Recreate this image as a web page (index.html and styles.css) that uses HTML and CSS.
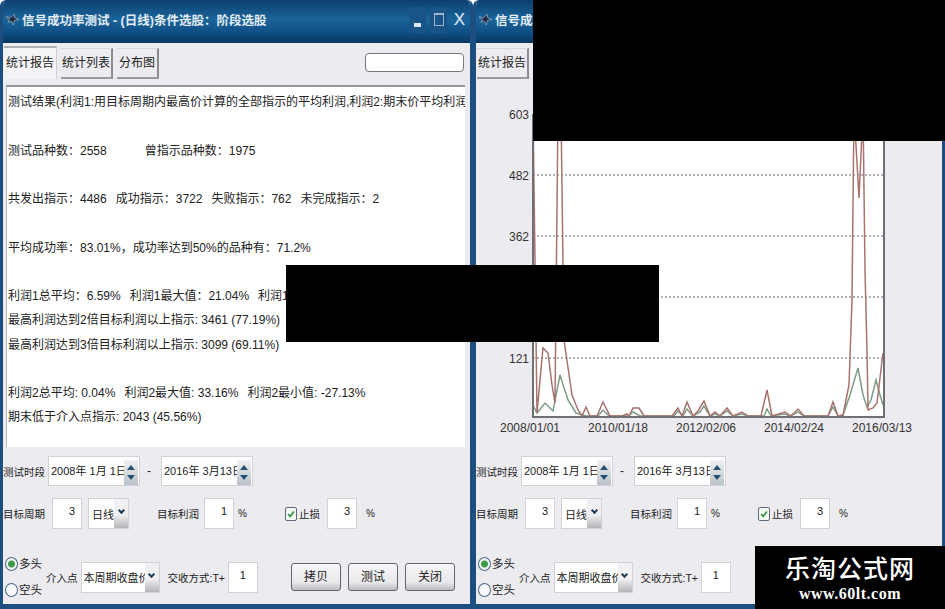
FILE: index.html
```html
<!DOCTYPE html>
<html lang="zh-CN">
<head>
  <meta charset="UTF-8">
  <title>信号成功率测试</title>
  <link rel="stylesheet" href="styles.css">
</head>
<body>

<div class="desktop">

  <!-- 左边窗口: 统计报告 -->
  <div class="window window-left">
    <div class="titlebar">
      <svg class="title-icon" viewBox="0 0 14 12"><path d="M0 3 L5 4 L9 0 L9 4 L14 6 L9 7 L8 12 L6 8 L2 9 L4 6 Z" fill="#1c2a3c" stroke="#c9d4e0" stroke-width="0.6"/></svg>
      <span class="title-text">信号成功率测试 - (日线)条件选股：阶段选股</span>
      <div class="win-buttons">
        <span class="win-btn"><i class="min-mark"></i></span>
        <span class="win-btn"><i class="max-mark"></i></span>
        <span class="win-btn close-mark">X</span>
      </div>
    </div>
    <div class="client">
      <div class="tabs">
        <span class="tab tab-active">统计报告</span>
        <span class="tab">统计列表</span>
        <span class="tab">分布图</span>
        <span class="search-box"></span>
      </div>
      <div class="report">
        <p>测试结果(利润1:用目标周期内最高价计算的全部指示的平均利润,利润2:期末价平均利润)</p>
        <p class="blank"></p>
        <p>测试品种数：2558<span class="gap-wide"></span>曾指示品种数：1975</p>
        <p class="blank"></p>
        <p>共发出指示：4486<span class="gap"></span>成功指示：3722<span class="gap"></span>失败指示：762<span class="gap"></span>未完成指示：2</p>
        <p class="blank"></p>
        <p>平均成功率：83.01%，成功率达到50%的品种有：71.2%</p>
        <p class="blank"></p>
        <p>利润1总平均：6.59%<span class="gap"></span>利润1最大值：21.04%<span class="gap"></span>利润1最小值</p>
        <p>最高利润达到2倍目标利润以上指示: 3461 (77.19%)</p>
        <p>最高利润达到3倍目标利润以上指示: 3099 (69.11%)</p>
        <p class="blank"></p>
        <p>利润2总平均: 0.04%<span class="gap"></span>利润2最大值: 33.16%<span class="gap"></span>利润2最小值: -27.13%</p>
        <p>期末低于介入点指示: 2043 (45.56%)</p>
      </div>
      <div class="row row-dates">
        <span class="label">测试时段</span>
        <span class="date">2008年 1月 1日<span class="spin"><i class="up"></i><i class="down"></i></span></span>
        <span class="dash">-</span>
        <span class="date">2016年 3月13日<span class="spin"><i class="up"></i><i class="down"></i></span></span>
      </div>
      <div class="row row-target">
        <span class="label">目标周期</span>
        <span class="field field-period">3</span>
        <span class="combo combo-short">日线<span class="arrow"><i></i></span></span>
        <span class="label label-profit">目标利润</span>
        <span class="field">1</span>
        <span class="unit">%</span>
        <span class="check"><svg viewBox="0 0 12 12"><path d="M2.5 6 L5 9 L9.5 3" fill="none" stroke="#2f8f3a" stroke-width="2"/></svg></span>
        <span class="label">止损</span>
        <span class="field field-stop">3</span>
        <span class="unit unit-stop">%</span>
      </div>
      <div class="row row-entry">
        <div class="radios">
          <span class="radio-line"><span class="radio radio-on"></span>多头</span>
          <span class="radio-line"><span class="radio"></span>空头</span>
        </div>
        <span class="label label-entry">介入点</span>
        <span class="combo combo-long"><span class="combo-text">本周期收盘价</span><span class="arrow"><i></i></span></span>
        <span class="label label-settle">交收方式:T+</span>
        <span class="field field-settle">1</span>
        <div class="actions">
          <span class="button">拷贝</span>
          <span class="button">测试</span>
          <span class="button">关闭</span>
        </div>
      </div>
    </div>
  </div>

  <!-- 右边窗口: 分布图 -->
  <div class="window window-right">
    <div class="titlebar">
      <svg class="title-icon" viewBox="0 0 14 12"><path d="M0 3 L5 4 L9 0 L9 4 L14 6 L9 7 L8 12 L6 8 L2 9 L4 6 Z" fill="#1c2a3c" stroke="#c9d4e0" stroke-width="0.6"/></svg>
      <span class="title-text">信号成功率测试 - (日线)条件选股：阶段选股</span>
    </div>
    <div class="client">
      <div class="tabs">
        <span class="tab">统计报告</span>
        <span class="tab">统计列表</span>
        <span class="tab">分布图</span>
      </div>
      <div class="chart">
        <svg width="469" height="362" viewBox="476 85 469 362">
          <defs><clipPath id="plotClip"><rect x="533" y="114" width="351" height="303"/></clipPath></defs>
          <rect x="533" y="114" width="351" height="303" fill="#fff"/>
          <g class="grid">
            <line x1="533" y1="175" x2="884" y2="175"/>
            <line x1="533" y1="236" x2="884" y2="236"/>
            <line x1="533" y1="297" x2="884" y2="297"/>
            <line x1="533" y1="358" x2="884" y2="358"/>
          </g>
          <g clip-path="url(#plotClip)">
            <polyline class="line-green" points="533,405 537,413 545,403 553,411 560,375 568,400 576,413 586,416 598,416 603,410 609,416 628,416 633,412 640,416 674,416 678,411 683,416 687,409 693,416 700,412 704,406 710,416 715,414 720,416 727,411 733,416 742,414 748,416 764,416 767,409 771,416 785,414 790,416 798,412 804,416 828,416 833,407 838,416 843,415 850,395 858,368 863,395 867,407 871,400 876,380 880,395 883,405"/>
            <polyline class="line-brown" points="533,110 537,413 540,380 543,348 548,353 552,385 555,403 558,110 561,110 564,340 572,395 578,410 582,416 586,407 590,416 597,416 603,402 610,416 622,416 627,414 629,416 633,408 639,408 644,416 672,416 678,408 682,416 687,402 693,416 698,411 704,401 710,416 715,412 720,416 727,408 733,416 742,412 748,416 761,416 767,390 772,416 785,412 791,416 798,409 804,416 828,416 833,402 838,416 843,415 849,385 852,300 854,110 859,198 863,110 865,270 867,350 868,410 873,408 877,403 883,353"/>
          </g>
          <path class="axis" d="M533 114 V417 H884 V114"/>
          <g class="y-label">
            <text x="529" y="119">603</text>
            <text x="529" y="180">482</text>
            <text x="529" y="241">362</text>
            <text x="529" y="363">121</text>
          </g>
          <g class="x-label">
            <text x="530" y="432">2008/01/01</text>
            <text x="618" y="432">2010/01/18</text>
            <text x="706" y="432">2012/02/06</text>
            <text x="794" y="432">2014/02/24</text>
            <text x="882" y="432">2016/03/13</text>
          </g>
        </svg>
      </div>
      <div class="row row-dates">
        <span class="label">测试时段</span>
        <span class="date">2008年 1月 1日<span class="spin"><i class="up"></i><i class="down"></i></span></span>
        <span class="dash">-</span>
        <span class="date">2016年 3月13日<span class="spin"><i class="up"></i><i class="down"></i></span></span>
      </div>
      <div class="row row-target">
        <span class="label">目标周期</span>
        <span class="field field-period">3</span>
        <span class="combo combo-short">日线<span class="arrow"><i></i></span></span>
        <span class="label label-profit">目标利润</span>
        <span class="field">1</span>
        <span class="unit">%</span>
        <span class="check"><svg viewBox="0 0 12 12"><path d="M2.5 6 L5 9 L9.5 3" fill="none" stroke="#2f8f3a" stroke-width="2"/></svg></span>
        <span class="label">止损</span>
        <span class="field field-stop">3</span>
        <span class="unit unit-stop">%</span>
      </div>
      <div class="row row-entry">
        <div class="radios">
          <span class="radio-line"><span class="radio radio-on"></span>多头</span>
          <span class="radio-line"><span class="radio"></span>空头</span>
        </div>
        <span class="label label-entry">介入点</span>
        <span class="combo combo-long"><span class="combo-text">本周期收盘价</span><span class="arrow"><i></i></span></span>
        <span class="label label-settle">交收方式:T+</span>
        <span class="field field-settle">1</span>
      </div>
    </div>
  </div>

  <!-- 涂黑的部分和水印 -->
  <div class="cover cover-top"></div>
  <div class="cover cover-middle"></div>
  <div class="watermark">
    <span class="watermark-name">乐淘公式网</span>
    <span class="watermark-url">www.60lt.com</span>
  </div>

</div>

</body>
</html>
```

FILE: styles.css
```css
body {
  margin: 0;
  background: #fff;
  font-family: "Liberation Sans", "Noto Sans CJK SC", sans-serif;
  color: #222;
}

.desktop {
  position: relative;
  width: 945px;
  height: 609px;
  overflow: hidden;
}

/* 窗口 */
.window {
  position: absolute;
  top: 0;
  height: 609px;
  box-sizing: border-box;
  border: 3px solid #1c4f80;
  border-top: none;
  border-bottom-width: 5px;
  display: flex;
  flex-direction: column;
  border-radius: 6px 6px 0 0;
  overflow: hidden;
}

.window-left {
  left: 0;
  width: 473px;
}

.window-right {
  left: 473px;
  width: 472px;
}

.titlebar {
  height: 43px;
  flex: none;
  display: flex;
  align-items: center;
  padding: 0 2px 4px 3px;
  box-sizing: border-box;
  background: linear-gradient(#0d3f6e, #1a659b 45%, #0f4f85 75%, #08365f);
}

.title-icon {
  width: 13px;
  height: 11px;
  margin-right: 3px;
}

.title-text {
  color: #e4ecf4;
  font-size: 12.5px;
  font-weight: 700;
  white-space: nowrap;
}

.win-buttons {
  margin-left: auto;
  display: flex;
  gap: 4px;
}

.win-btn {
  width: 17px;
  height: 26px;
  display: flex;
  align-items: center;
  justify-content: center;
  background: #1a5486;
  border-radius: 2px;
}

.min-mark {
  width: 7px;
  height: 4px;
  margin-top: 11px;
  background: #dfe8f2;
}

.max-mark {
  width: 10px;
  height: 13px;
  box-sizing: border-box;
  border: 1px solid #9db5cc;
  border-top-width: 2px;
}

.close-mark {
  color: #e6eef6;
  font-size: 17px;
  background: none;
}

.client {
  flex: 1;
  background: #ecebf0;
  display: flex;
  flex-direction: column;
}

/* 标签页 */
.tabs {
  height: 32px;
  margin-top: 4px;
  padding-left: 1px;
  display: flex;
  align-items: flex-end;
  gap: 4px;
}

.tab {
  width: 50px;
  height: 28px;
  line-height: 28px;
  text-align: center;
  font-size: 12px;
  background: #ecebf0;
  border-right: 2px solid #8c8c90;
  border-bottom: 2px solid #9a9a9e;
  border-top: 1px solid #d8d8dc;
}

.tab:nth-child(3) {
  width: 40px;
}

.tab-active {
  height: 31px;
  line-height: 31px;
  width: 52px;
  background: #f4f4f6;
  border-top: 2px solid #b0b0b4;
  border-bottom: none;
  border-right: 1px solid #d0d0d4;
}

.search-box {
  width: 97px;
  height: 17px;
  margin: 0 6px 7px auto;
  background: #fff;
  border: 1px solid #77777c;
  border-radius: 4px;
}

/* 报告文字 */
.report {
  height: 362px;
  box-sizing: border-box;
  margin: 6px 5px 0 3px;
  padding: 3px 0 0 1px;
  background: #fff;
  border-top: 2px solid #97979b;
  border-left: 1px solid #b8b8bc;
  font-size: 12px;
  line-height: 24.25px;
  overflow: hidden;
  white-space: nowrap;
}

.report p {
  margin: 0;
  height: 24.25px;
}

.gap {
  display: inline-block;
  width: 9px;
}

.gap-wide {
  display: inline-block;
  width: 38px;
}

/* 图表 */
.chart {
  height: 362px;
  margin-top: 6px;
}

.chart svg {
  display: block;
}

.grid line {
  stroke: #666;
  stroke-dasharray: 2 2;
}

.line-brown {
  fill: none;
  stroke: #a8726e;
  stroke-width: 1.5;
}

.line-green {
  fill: none;
  stroke: #7f9c86;
  stroke-width: 1.5;
}

.axis {
  fill: none;
  stroke: #6f6f74;
  stroke-width: 2;
}

.y-label text {
  font-size: 12px;
  text-anchor: end;
  fill: #333;
}

.x-label text {
  font-size: 12px;
  text-anchor: middle;
  fill: #333;
}

/* 下面的控件 */
.row {
  display: flex;
  align-items: center;
  font-size: 11px;
  white-space: nowrap;
}

.row-dates {
  margin-top: 9px;
  height: 30px;
}

.row-target {
  margin-top: 11px;
  height: 33px;
}

.row-entry {
  margin-top: 25px;
  height: 44px;
}

.label {
  font-size: 10.5px;
}

.date {
  position: relative;
  width: 92px;
  height: 30px;
  box-sizing: border-box;
  margin-left: 3px;
  padding-left: 2px;
  line-height: 28px;
  background: #fff;
  border: 1px solid #d2d2d6;
  font-size: 11px;
}

.spin {
  position: absolute;
  top: 3px;
  right: 1px;
  width: 14px;
  height: 25px;
  display: flex;
  flex-direction: column;
  align-items: center;
  justify-content: center;
  gap: 5px;
  background: linear-gradient(#eef1f5, #b9c2c8);
}

.up {
  border: 4px solid transparent;
  border-top: none;
  border-bottom: 5px solid #235070;
}

.down {
  border: 4px solid transparent;
  border-bottom: none;
  border-top: 5px solid #235070;
}

.dash {
  margin: 0 7px 0 7px;
  font-size: 12px;
}

.field {
  width: 30px;
  height: 31px;
  box-sizing: border-box;
  margin-left: 5px;
  padding: 6px 6px 0 0;
  text-align: right;
  background: #fff;
  border: 1px solid #d2d2d6;
  font-size: 11px;
}

.field-period {
  margin-left: 7px;
}

.field-stop {
  margin-left: 7px;
}

.field-settle {
  margin-left: 3px;
  padding-right: 11px;
}

.combo {
  display: flex;
  align-items: center;
  height: 31px;
  box-sizing: border-box;
  background: #fff;
  border: 1px solid #d2d2d6;
  font-size: 11px;
  overflow: hidden;
}

.combo-short {
  width: 41px;
  margin-left: 6px;
  padding-left: 3px;
}

.combo-long {
  width: 79px;
  margin-left: 3px;
  padding-left: 2px;
}

.combo-text {
  width: 62px;
  overflow: hidden;
}

.arrow {
  margin-left: auto;
  width: 14px;
  height: 100%;
  flex: none;
  display: flex;
  align-items: center;
  justify-content: center;
  background: linear-gradient(#f0f0f2, #f0f0f2 55%, #b4b4b8);
}

.arrow i {
  width: 5px;
  height: 5px;
  margin-top: -6px;
  box-sizing: border-box;
  border-right: 2px solid #1e3a52;
  border-bottom: 2px solid #1e3a52;
  transform: rotate(45deg);
}

.label-profit {
  margin-left: 28px;
}

.unit {
  margin-left: 4px;
  font-size: 10px;
  width: 10px;
}

.unit-stop {
  margin-left: 9px;
}

.check {
  width: 12px;
  height: 14px;
  margin: 0 2px 0 37px;
  box-sizing: border-box;
  background: #f4f8f4;
  border: 1px solid #5f6a78;
  border-radius: 2px;
  display: block;
}

.check svg {
  display: block;
  width: 10px;
  height: 12px;
}

.radios {
  width: 41px;
  margin-left: 2px;
  display: flex;
  flex-direction: column;
  gap: 9px;
}

.radio-line {
  display: flex;
  align-items: center;
  gap: 1px;
  font-size: 11.5px;
  line-height: 17px;
}

.radio {
  width: 13px;
  height: 14px;
  box-sizing: border-box;
  border: 1px solid #4c6a86;
  border-radius: 50%;
  background: #f6f8fa;
}

.radio-on {
  background: radial-gradient(circle, #3f9a4c 0 3px, #f0f4f0 4px);
}

.label-settle {
  margin-left: 8px;
}

.actions {
  margin-left: 33px;
  display: flex;
  gap: 7px;
}

.button {
  width: 50px;
  height: 28px;
  box-sizing: border-box;
  text-align: center;
  line-height: 26px;
  font-size: 12px;
  background: linear-gradient(#f6f6f8, #e9e9ec 70%, #bcbcc0);
  border: 1px solid #66666a;
  border-radius: 3px;
}

/* 涂黑 */
.cover {
  position: absolute;
  background: #000;
}

.cover-top {
  left: 533px;
  top: 0;
  width: 412px;
  height: 141px;
}

.cover-middle {
  left: 286px;
  top: 265px;
  width: 373px;
  height: 77px;
}

.watermark {
  position: absolute;
  left: 755px;
  top: 546px;
  width: 190px;
  height: 63px;
  background: #000;
  color: #fff;
  display: flex;
  flex-direction: column;
  align-items: center;
}

.watermark-name {
  margin-top: 7px;
  font-size: 25px;
  line-height: 32px;
  letter-spacing: 1px;
  font-weight: 500;
}

.watermark-url {
  font-family: "Liberation Serif", serif;
  font-size: 16px;
  font-weight: 700;
  letter-spacing: 0.5px;
  line-height: 18px;
}
```
